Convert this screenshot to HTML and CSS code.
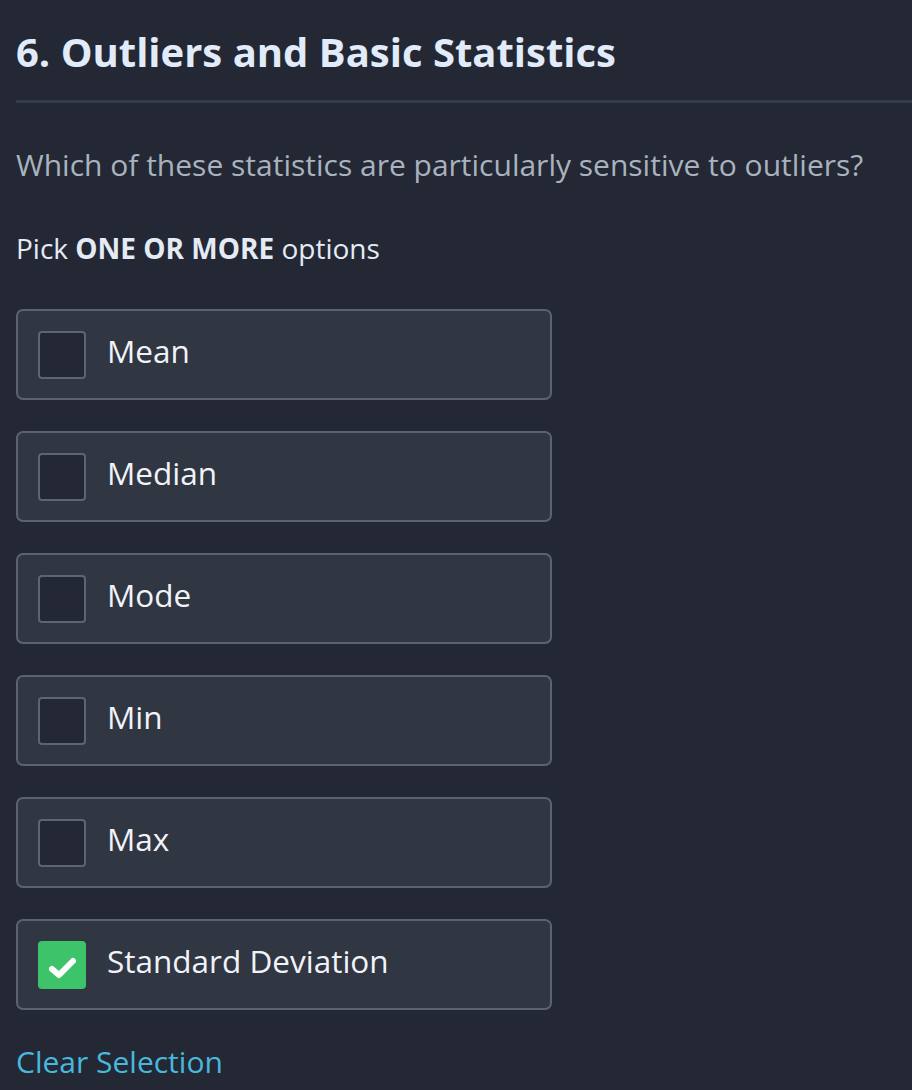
FILE: index.html
```html
<!DOCTYPE html>
<html>
<head>
<meta charset="utf-8">
<link rel="stylesheet" href="styles.css">
</head>
<body>
<div class="page">
  <h1 class="title">6. Outliers and Basic Statistics</h1>
  <div class="divider"></div>
  <p class="question">Which of these statistics are particularly sensitive to outliers?</p>
  <p class="hint">Pick <b>ONE OR MORE</b> options</p>
  <div class="options">
    <div class="option"><span class="box"></span><span class="label">Mean</span></div>
    <div class="option"><span class="box"></span><span class="label">Median</span></div>
    <div class="option"><span class="box"></span><span class="label">Mode</span></div>
    <div class="option"><span class="box"></span><span class="label">Min</span></div>
    <div class="option"><span class="box"></span><span class="label">Max</span></div>
    <div class="option"><span class="box checked"><svg viewBox="0 0 48 48" width="48" height="48"><path d="M14 32l7 6L35 24" fill="none" stroke="#fff" stroke-width="6" stroke-linecap="round" stroke-linejoin="round"/></svg></span><span class="label">Standard Deviation</span></div>
  </div>
  <a class="clear">Clear Selection</a>
</div>
</body>
</html>
```
FILE: styles.css
```css
html, body {
  margin: 0;
  padding: 0;
  background: #232834;
}
body {
  font-family: "Open Sans", "Noto Sans", sans-serif;
  overflow: hidden;
}
.page {
  padding: 0 0 0 16px;
}
.title {
  margin: 0;
  padding-top: 26px;
  font-size: 40px;
  line-height: 52px;
  font-weight: 700;
  color: #e1ebf9;
}
.divider {
  margin-top: 22px;
  height: 3px;
  background: #353b48;
}
.question {
  margin: 42px 0 0;
  font-size: 30px;
  line-height: 40px;
  color: #a9b2bf;
}
.hint {
  margin: 44px 0 0;
  font-size: 28px;
  line-height: 38px;
  color: #e4ebf5;
}
.hint b {
  font-weight: 700;
}
.options {
  margin-top: 42px;
  display: flex;
  flex-direction: column;
  gap: 31px;
  width: 536px;
}
.option {
  box-sizing: border-box;
  height: 91px;
  border: 2px solid #5b6272;
  border-radius: 7px;
  background: #313643;
  display: flex;
  align-items: center;
  padding-left: 20px;
}
.box {
  box-sizing: border-box;
  width: 48px;
  height: 48px;
  border: 2px solid #5d6475;
  border-radius: 4px;
  background: #232834;
  flex-shrink: 0;
  position: relative;
}
.box.checked {
  background: #3dc46b;
  border-color: #3dc46b;
}
.box svg {
  position: absolute;
  left: -2px;
  top: -6px;
}
.label {
  margin-left: 21px;
  font-size: 31.5px;
  line-height: 40px;
  position: relative;
  top: -4px;
  color: #f0f3f8;
}
.clear {
  display: block;
  margin-top: 32px;
  font-size: 30px;
  line-height: 40px;
  color: #48b8de;
}
```
